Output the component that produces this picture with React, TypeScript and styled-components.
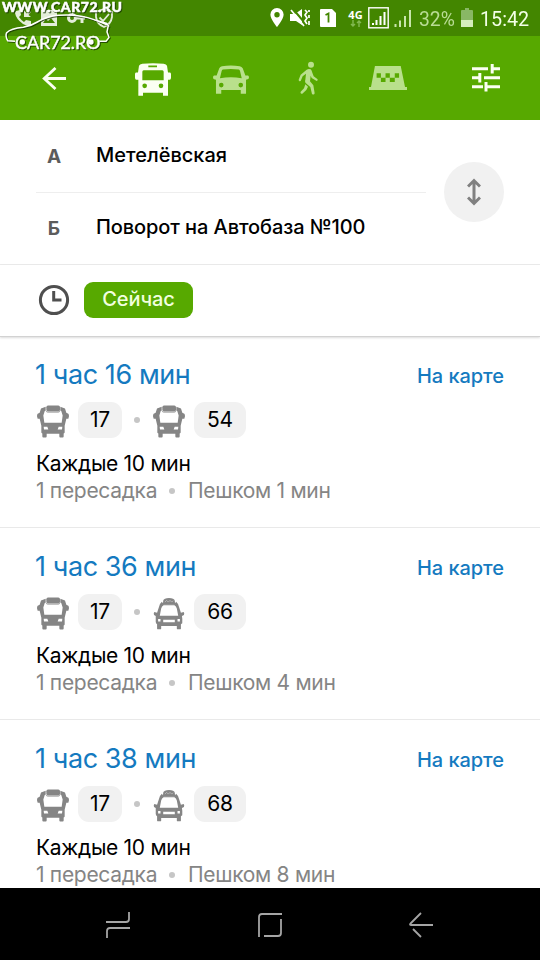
import React from "react";
import styled, { createGlobalStyle } from "styled-components";

const GlobalStyle = createGlobalStyle`
  * { box-sizing: border-box; }
  body { margin: 0; background: #000; }
`;

const Screen = styled.main`
  position: relative;
  width: 540px;
  height: 960px;
  display: flex;
  flex-direction: column;
  overflow: hidden;
  background: #fff;
  font-family: Inter, "Liberation Sans", sans-serif;
  font-kerning: normal;
`;

/* Status bar */
const StatusBar = styled.div`
  flex: none;
  height: 36px;
  padding: 0 12px 0 15px;
  display: flex;
  align-items: center;
  justify-content: space-between;
  background: #438600;
  color: #fff;
`;
const Notifications = styled.div`
  display: flex;
  align-items: center;
  gap: 10px;
  opacity: 0.85;
`;
const Indicators = styled.div`
  display: grid;
  grid-template-columns: 20px 30px 27px 21px 25px 26px 42px 19px 48px;
  align-items: center;
`;
const Network = styled.div`
  display: flex;
  flex-direction: column;
  align-items: center;
  width: 17px;
  font: 700 11px/10px "Open Sans", sans-serif;
`;
const StatusText = styled.span<{ $dim?: boolean }>`
  padding-top: 2px;
  font-family: Roboto, sans-serif;
  font-size: 21px;
  line-height: 24px;
  color: ${(p) => (p.$dim ? "#b9dc94" : "#f3ffe6")};
  transform: scaleX(${(p) => (p.$dim ? 0.92 : 0.94)});
  transform-origin: left center;
  white-space: nowrap;
`;

/* Watermark */
const Watermark = styled.div`
  position: absolute;
  left: 0;
  top: 0;
  width: 130px;
  height: 54px;
  color: #fff;
  font-family: Lato, sans-serif;
  filter: drop-shadow(1px 1px 0.5px rgba(20, 50, 0, 0.75));
  svg { position: absolute; left: 0; top: 0; }
`;
const SiteName = styled.span`
  position: absolute;
  left: 2px;
  top: 0;
  font-size: 14px;
  line-height: 14px;
  font-weight: 900;
  letter-spacing: 0.55px;
  -webkit-text-stroke: 0.5px #fff;
  white-space: nowrap;
`;
const LogoName = styled.span`
  position: absolute;
  left: 15px;
  top: 31px;
  font-size: 18px;
  line-height: 22px;
  font-weight: 400;
  letter-spacing: -0.1px;
  -webkit-text-stroke: 0.4px #fff;
  white-space: nowrap;
`;

/* Mode tabs */
const Header = styled.header`
  flex: none;
  height: 84px;
  display: grid;
  grid-template-columns: 108px 90px 66px 88px 72px 124px;
  align-items: center;
  justify-items: center;
  background: #57a900;
`;
const Tab = styled.button<{ $active?: boolean; $shift?: number }>`
  display: flex;
  padding: ${(p) => p.$shift ?? 0}px 0 0;
  border: 0;
  background: none;
  color: ${(p) => (p.$active ? "#fbfff2" : "#b9e08c")};
`;

/* Form */
const Form = styled.section`
  flex: none;
  height: 145px;
  display: grid;
  grid-template-columns: 390px 96px;
  padding-left: 36px;
  align-items: center;
  border-bottom: 1px solid #ebebeb;
`;
const Point = styled.div<{ $line?: boolean }>`
  height: ${(p) => (p.$line ? 73 : 71)}px;
  display: grid;
  grid-template-columns: 36px 1fr;
  column-gap: 24px;
  align-items: center;
  border-bottom: ${(p) => (p.$line ? "1px solid #eeeeee" : "0")};
  padding-bottom: ${(p) => (p.$line ? 2 : 3)}px;
`;
const Letter = styled.span`
  padding: 3px 0 0 0;
  text-align: center;
  font-size: 19px;
  line-height: 24px;
  font-weight: 700;
  color: #5c5c5c;
`;
const Place = styled.span<{ $spacing: number }>`
  font-size: 20px;
  line-height: 24px;
  font-weight: 500;
  letter-spacing: ${(p) => p.$spacing}px;
  color: #000;
  white-space: nowrap;
`;
const Swap = styled.button`
  justify-self: end;
  width: 60px;
  height: 60px;
  margin-right: 18px;
  padding: 0;
  border: 0;
  border-radius: 50%;
  display: grid;
  place-items: center;
  background: #f1f1f1;
`;
const TimeRow = styled.section`
  flex: none;
  height: 72px;
  padding: 0 0 1px 38px;
  display: flex;
  align-items: center;
  gap: 14px;
  border-bottom: 1px solid #d2d2d2;
  box-shadow: 0 1px 2px rgba(0, 0, 0, 0.14);
  z-index: 1;
`;
const NowButton = styled.button`
  width: 109px;
  height: 36px;
  padding: 0 0 2px;
  border: 0;
  border-radius: 9px;
  background: #57a900;
  color: #f1ffdf;
  font: 500 20px/24px Inter, sans-serif;
  letter-spacing: -0.1px;
`;

/* Results */
const Results = styled.section`
  flex: none;
  height: 551px;
  overflow: hidden;
`;
const Card = styled.article`
  height: 192px;
  padding: 22px 36px 0;
  display: flex;
  flex-direction: column;
  border-bottom: 1px solid #e9e9e9;
  &:first-child {
    height: 191px;
    padding-top: 21px;
  }
`;
const CardHead = styled.div`
  height: 44px;
  display: flex;
  justify-content: space-between;
  align-items: flex-start;
`;
const Duration = styled.h2`
  margin: 0 0 0 -1px;
  font-size: 27px;
  line-height: 34px;
  font-weight: 400;
  letter-spacing: -0.42px;
  color: #147ac0;
  white-space: nowrap;
`;
const MapLink = styled.a`
  font-size: 20px;
  line-height: 36px;
  font-weight: 500;
  letter-spacing: -0.05px;
  color: #147ac0;
  white-space: nowrap;
`;
const Legs = styled.div`
  height: 36px;
  padding-left: 1px;
  display: grid;
  grid-template-rows: 36px;
  grid-template-columns: 41px 44px 12px 19px 41px 52px;
  align-items: center;
  svg { margin-top: 3px; }
`;
const RouteChip = styled.span`
  height: 36px;
  padding-bottom: 1px;
  border-radius: 11px;
  display: grid;
  place-items: center;
  background: #f1f1f1;
  font-size: 21px;
  letter-spacing: -0.2px;
  color: #000;
`;
const LegDot = styled.i`
  grid-column: 4;
  width: 6px;
  height: 6px;
  border-radius: 50%;
  background: #c6c6c6;
`;
const Dot = styled.i`
  width: 6px;
  height: 6px;
  border-radius: 50%;
  background: #c6c6c6;
  margin: 0 13px 0 12px;
`;
const Interval = styled.p`
  margin: 12px 0 0;
  font-size: 21px;
  line-height: 27px;
  letter-spacing: -0.3px;
  color: #000;
  white-space: nowrap;
`;
const Details = styled.p`
  margin: 0;
  display: flex;
  align-items: center;
  font-size: 21px;
  line-height: 27px;
  letter-spacing: -0.3px;
  color: #858585;
  white-space: nowrap;
`;
const Transfers = styled.span`
  width: 121px;
`;

/* System navigation */
const NavBar = styled.nav`
  flex: none;
  height: 72px;
  display: grid;
  grid-template-columns: 236px 68px 234px;
  align-items: center;
  justify-items: center;
  background: #000;
  padding-top: 2px;
`;

const BigBus = () => (
  <svg width="36" height="33" viewBox="0 0 108 98" fill="currentColor">
    <path fillRule="evenodd" d="M12 8Q14 3 22 2Q54-2 86 2Q94 3 96 8L99 28H105Q108 29 108 33V44Q108 50 104 50H99V98H84V89H24V98H10V50H4Q0 50 0 44V33Q0 29 3 28H9ZM26 21Q22 21 22 26V51H86V26Q86 21 82 21ZM40 7V12H66V7ZM29 61A7 7 0 1 0 29 75A7 7 0 1 0 29 61ZM78 61A7 7 0 1 0 78 75A7 7 0 1 0 78 61Z" />
  </svg>
);
const BigCar = () => (
  <svg width="36" height="29" viewBox="0 0 109 86" fill="currentColor">
    <path fillRule="evenodd" d="M19 9Q21 4 27 3Q54-2 81 3Q87 4 90 9L98 31H106Q109 32 109 37Q109 43 102 43L100 44V86H84V75H25V86H9V44L6 43Q0 43 0 37Q0 32 3 31H11ZM30 13Q27 14 26 18L21 39Q54 34 87 39L82 18Q81 14 78 13Q54 9 30 13ZM25 53A7 7 0 1 0 25 67A7 7 0 1 0 25 53ZM84 53A7 7 0 1 0 84 67A7 7 0 1 0 84 53Z" />
  </svg>
);
const Walker = () => (
  <svg width="20" height="34" viewBox="0 0 60 102" fill="currentColor">
    <circle cx="39" cy="11" r="9" />
    <path d="M26 26Q32 22 38 25Q41 27 43 35L47 46L58 54Q61 58 56 60L41 51L38 44L36 61L46 73L50 97Q48 103 42 99L37 78L23 66Q20 62 22 56L24 38L14 46L8 60Q2 62 2 56L8 41Z" />
    <path d="M22 70L30 77L25 87L13 98Q6 98 8 92L18 82Z" />
  </svg>
);
const TaxiSign = () => (
  <svg width="38" height="24" viewBox="0 0 115 72">
    <path fill="currentColor" d="M18 0H96L109 63H115V72H0V63H6Z" />
    <path fill="#57a900" d="M23 22H36V35H23ZM50 22H63V35H50ZM78 22H91V35H78ZM36 35H50V48H36ZM63 35H78V48H63Z" />
  </svg>
);
const Sliders = () => (
  <svg width="28" height="28" viewBox="0 0 28 28" fill="none" stroke="currentColor" strokeWidth="3">
    <path d="M0 4.7H16M19 4.7H28M20.2 0V9.5M0 13.8H8M12 13.8H28M7.8 9V18.5M0 22.8H11M14 22.8H28M14 18V27.5" />
  </svg>
);
const BackArrow = () => (
  <svg width="24" height="23" viewBox="0 0 24 23" fill="none" stroke="currentColor" strokeWidth="2.8">
    <path d="M24 11.5H2M13.5 1L2.2 11.5L13.5 22" />
  </svg>
);
const SmallBus = () => (
  <svg width="32" height="33" viewBox="0 0 96 98" fill="#858585">
    <path fillRule="evenodd" d="M12 10L26 5V14Q26 20 32 20H64Q70 20 70 14V5L84 10L88 23L94 26Q96 28 96 33L94 41H88L83 62V82Q83 84 80 85V94Q80 97 77 97H70Q67 97 67 94V86H29V94Q29 97 26 97H19Q16 97 16 94V85Q13 84 13 82V62L8 41H2L0 33Q0 28 2 26L8 23ZM23 18L19 31L22 53H74L77 31L73 18L70 15Q70 22 64 22H32Q26 22 26 15ZM20 65L21 73H34L31 65ZM76 65L75 73H62L65 65Z" />
    <rect x="28" y="1" width="41" height="18" rx="5" />
  </svg>
);
const SmallTaxi = () => (
  <svg width="32" height="32" viewBox="-2 0 94 94" fill="#858585">
    <path fillRule="evenodd" d="M24 11L30 19H60L66 11Q72 16 74 25L80 43L88 41Q91 44 89 50L83 53Q85 62 84 74L80 77V90Q80 92 76 92H71Q68 92 68 90V82H22V90Q22 92 19 92H14Q10 92 10 90V77Q6 75 6 70V53L1 50Q-1 44 2 41L10 43L16 25Q18 16 24 11ZM29 21Q24 24 22 31L18 52H72L68 31Q66 24 61 21ZM13 62V69H20V62ZM28 64V71H62V64ZM70 62V69H77V62Z" />
    <path d="M28 8Q30 0 45 0Q60 0 62 8L63 20H27Z" />
    <path d="M33 12L38 7L43 12L48 7L53 12L57 8" fill="none" stroke="#bdbdbd" strokeWidth="2.5" />
  </svg>
);

const Signal = ({ boxed }: { boxed?: boolean }) => (
  <svg width="21" height="22" viewBox="0 0 21 22" fill="none" stroke={boxed ? "#fff" : "#c9e6ab"}>
    {boxed ? (
      <>
        <rect x="0.8" y="0.8" width="19.4" height="20" strokeWidth="1.4" />
        <path d="M5 18V16M8.5 18V13M12.5 18V9M16.5 18V5" strokeWidth="2" />
      </>
    ) : (
      <path d="M2.5 20V17M7 20V13.5M12 20V9M17 20V3" strokeWidth="2" />
    )}
  </svg>
);

const routes = [
  { duration: "1 час 16 мин", first: "17", second: "54", taxi: false, walk: "Пешком 1 мин" },
  { duration: "1 час 36 мин", first: "17", second: "66", taxi: true, walk: "Пешком 4 мин" },
  { duration: "1 час 38 мин", first: "17", second: "68", taxi: true, walk: "Пешком 8 мин" },
];

export default function App() {
  return (
    <Screen>
      <GlobalStyle />
      <StatusBar>
        <Notifications>
          <svg width="16" height="16" viewBox="0 0 16 16" fill="#fff">
            <path d="M1 1L5 0L6 5L4 7Q6 10 9 12L11 10L16 11V15Q13 17 8 14Q1 9 0 3ZM9 0V7H16L13.5 5L16 2L14.5 0.5L11.5 3.5Z" />
          </svg>
          <svg width="16" height="16" viewBox="0 0 16 16" fill="#fff">
            <path fillRule="evenodd" d="M0 0H16V16H0ZM2 13H14L10 8L7 11L5 9Z" />
          </svg>
          <svg width="18" height="14" viewBox="0 0 18 14" fill="none" stroke="#fff" strokeWidth="3">
            <circle cx="5" cy="7" r="3.5" /><path d="M8 7H18M15 7V12" />
          </svg>
          <svg width="18" height="20" viewBox="0 0 18 20" fill="none" stroke="#fff" strokeWidth="1.8">
            <path d="M9 1L17 4V9Q16 16 9 19Q2 16 1 9V4ZM4.5 9.5L8 13L14 6" />
          </svg>
        </Notifications>
        <Indicators>
          <svg width="14" height="20" viewBox="0 0 14 20" fill="#fff">
            <path fillRule="evenodd" d="M7 0A6.6 6.6 0 0 0 .4 6.7C.4 11 7 19 7 19S13.6 11 13.6 6.7A6.6 6.6 0 0 0 7 0ZM7 4A2.7 2.7 0 1 0 7 9.4A2.7 2.7 0 1 0 7 4Z" />
          </svg>
          <svg width="20" height="20" viewBox="0 0 20 20" fill="#fff">
            <path d="M0 6H5L12 1V17L6 13H0Z" />
            <path d="M3 1L14 14" stroke="#438600" strokeWidth="2" />
            <path d="M1 2L14 18M15 2L17 4L15 7L17 10L15 13L17 16M19 2V4M19 7V10M19 13V17" fill="none" stroke="#fff" strokeWidth="1.7" />
          </svg>
          <svg width="16" height="18" viewBox="0 0 16 18">
            <path d="M1 0H12L16 4V18H1Q0 18 0 17V1Q0 0 1 0Z" fill="#fff" />
            <path d="M5.5 6L8.5 4.5V13.5" fill="none" stroke="#438600" strokeWidth="1.8" />
          </svg>
          <Network>
            4G
            <svg width="12" height="7" viewBox="0 0 12 7" fill="none" stroke="#83b951" strokeWidth="1.4">
              <path d="M3 0V6M1 4L3 6L5 4M9 7V1M7 3L9 1L11 3" />
            </svg>
          </Network>
          <Signal boxed />
          <Signal />
          <StatusText $dim>32%</StatusText>
          <svg width="12" height="20" viewBox="0 0 12 20">
            <path d="M4 0H8V2H11Q12 2 12 3V19H0V3Q0 2 1 2H4Z" fill="#89b765" />
            <path d="M0 12H12V19H0Z" fill="#d5edbb" />
          </svg>
          <StatusText>15:42</StatusText>
        </Indicators>
      </StatusBar>
      <Header>
        <Tab $active aria-label="Назад"><BackArrow /></Tab>
        <Tab $active $shift={3} aria-label="Автобус"><BigBus /></Tab>
        <Tab $shift={2} aria-label="Автомобиль"><BigCar /></Tab>
        <Tab aria-label="Пешком"><Walker /></Tab>
        <Tab aria-label="Такси"><TaxiSign /></Tab>
        <Tab $active aria-label="Настройки"><Sliders /></Tab>
      </Header>
      <Form>
        <div>
          <Point $line><Letter>А</Letter><Place $spacing={0}>Метелёвская</Place></Point>
          <Point><Letter>Б</Letter><Place $spacing={-0.09}>Поворот на Автобаза №100</Place></Point>
        </div>
        <Swap aria-label="Поменять местами">
          <svg width="14" height="28" viewBox="0 0 14 28" fill="none" stroke="#808080" strokeWidth="3">
            <path d="M7 2V26M1 8.5L7 2.5L13 8.5M1 19.5L7 25.5L13 19.5" />
          </svg>
        </Swap>
      </Form>
      <TimeRow>
        <svg width="32" height="32" viewBox="0 0 32 32" fill="none" stroke="#4f4f4f" strokeWidth="3">
          <circle cx="16" cy="16" r="13.6" /><path d="M15.7 7V16H23.5" />
        </svg>
        <NowButton>Сейчас</NowButton>
      </TimeRow>
      <Results>
        {routes.map((r) => (
          <Card key={r.duration}>
            <CardHead>
              <Duration>{r.duration}</Duration>
              <MapLink>На карте</MapLink>
            </CardHead>
            <Legs>
              <SmallBus />
              <RouteChip>{r.first}</RouteChip>
              <LegDot />
              {r.taxi ? <SmallTaxi /> : <SmallBus />}
              <RouteChip>{r.second}</RouteChip>
            </Legs>
            <Interval>Каждые 10 мин</Interval>
            <Details><Transfers>1 пересадка</Transfers><Dot />{r.walk}</Details>
          </Card>
        ))}
      </Results>
      <NavBar>
        <svg width="24" height="28" viewBox="0 0 24 28" fill="none" stroke="#a5a5a5" strokeWidth="1.8">
          <path d="M0 11H20Q23 11 23 8V1M24 17H4Q1 17 1 20V27" />
        </svg>
        <svg width="24" height="24" viewBox="0 0 24 24" fill="none" stroke="#a5a5a5" strokeWidth="1.8">
          <path d="M24 1H4Q1 1 1 4V24M23 6V20Q23 23 20 23H6" />
        </svg>
        <svg width="24" height="26" viewBox="0 0 24 26" fill="none" stroke="#a5a5a5" strokeWidth="1.8">
          <path d="M24 13H2Q0 13 2 11L12 1M4 17L12 25" />
        </svg>
      </NavBar>
      <Watermark>
        <svg width="130" height="54" viewBox="0 0 390 162" fill="none" stroke="#fff" strokeWidth="4.5">
          <path d="M45 124L23 122Q15 108 20 98Q32 86 70 82Q95 77 112 66Q140 49 175 46Q235 41 282 59L325 76L321 96L327 112L318 124H298M282 59L320 70L327 80" />
          <g fill="#fff" stroke="none"><circle cx="67" cy="126" r="8" /><circle cx="273" cy="126" r="8" /></g>
        </svg>
        <SiteName>WWW.CAR72.RU</SiteName>
        <LogoName>CAR72.RO</LogoName>
      </Watermark>
    </Screen>
  );
}
